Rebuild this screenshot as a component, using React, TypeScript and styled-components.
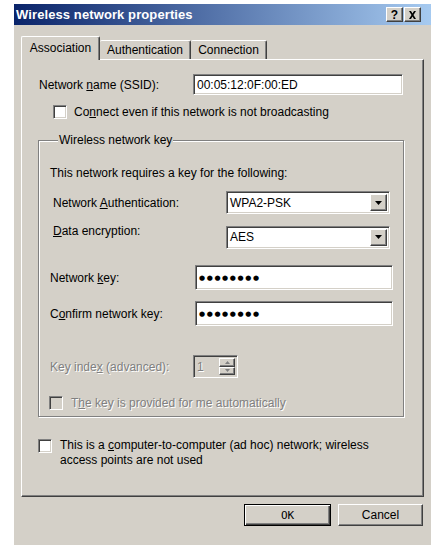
import React from 'react';
import styled, { createGlobalStyle, css } from 'styled-components';

const GlobalStyle = createGlobalStyle`
  html, body {
    margin: 0;
    padding: 0;
    background: #ffffff;
  }
  body {
    font-family: "Liberation Sans", Arial, sans-serif;
    font-size: 12px;
    color: #000000;
  }
`;

const face = '#D4D0C8';

const raised = css`
  border: 1px solid;
  border-color: #ffffff #404040 #404040 #ffffff;
  box-shadow: inset -1px -1px #808080;
`;

const sunken = css`
  border: 1px solid;
  border-color: #808080 #ffffff #ffffff #808080;
  box-shadow: inset 1px 1px #404040, inset -1px -1px ${face};
`;

export default function App() {
  return (
    <>
      <GlobalStyle />
      <Dialog>
        <TitleBar>
          <TitleText>Wireless network properties</TitleText>
          <TitleButtons>
            <TitleButton>?</TitleButton>
            <TitleButton>
              <svg width="9" height="8" viewBox="0 0 9 8">
                <path d="M1 0h2l1.5 2.5L6 0h2L5.5 4 8 8H6L4.5 5.5 3 8H1l2.5-4z" fill="#000" />
              </svg>
            </TitleButton>
          </TitleButtons>
        </TitleBar>

        <TabRow>
          <Tab $active $width={79}>Association</Tab>
          <Tab $width={91}>Authentication</Tab>
          <Tab $width={76}>Connection</Tab>
        </TabRow>

        <Page>
          <SsidRow>
            <Label $width={154}>
              Network <u>n</u>ame (SSID):
            </Label>
            <TextBox $width={210} $height={21}>
              00:05:12:0F:00:ED
            </TextBox>
          </SsidRow>

          <CheckRow $top={10} $left={31}>
            <CheckBox />
            <span>
              Co<u>n</u>nect even if this network is not broadcasting
            </span>
          </CheckRow>

          <Group>
            <Legend>Wireless network key</Legend>
            <Intro>This network requires a key for the following:</Intro>

            <FieldRow $top={11}>
              <Label $width={176} $indent={3}>
                Network <u>A</u>uthentication:
              </Label>
              <Select value="WPA2-PSK" />
            </FieldRow>
            <FieldRow $top={10}>
              <Label $width={176} $indent={3} $lift={6}>
                <u>D</u>ata encryption:
              </Label>
              <Select value="AES" />
            </FieldRow>

            <FieldRow $top={15}>
              <Label $width={145}>
                Network <u>k</u>ey:
              </Label>
              <TextBox $width={198} $height={25}>
                <Dots>●●●●●●●●</Dots>
              </TextBox>
            </FieldRow>
            <FieldRow $top={11}>
              <Label $width={145}>
                C<u>o</u>nfirm network key:
              </Label>
              <TextBox $width={198} $height={25}>
                <Dots>●●●●●●●●</Dots>
              </TextBox>
            </FieldRow>

            <FieldRow $top={29}>
              <Label $width={143} $disabled>
                Key inde<u>x</u> (advanced):
              </Label>
              <Spinner>
                <SpinValue>1</SpinValue>
                <SpinButtons>
                  <SpinButton>
                    <svg width="5" height="3" viewBox="0 0 5 3">
                      <path d="M2.5 0L5 3H0z" fill="#808080" />
                    </svg>
                  </SpinButton>
                  <SpinButton>
                    <svg width="5" height="3" viewBox="0 0 5 3">
                      <path d="M0 0h5L2.5 3z" fill="#808080" />
                    </svg>
                  </SpinButton>
                </SpinButtons>
              </Spinner>
            </FieldRow>

            <CheckRow $top={18} $left={-1} $gap={8}>
              <CheckBox $disabled />
              <Disabled>
                T<u>h</u>e key is provided for me automatically
              </Disabled>
            </CheckRow>
          </Group>

          <CheckRow $top={22} $left={16} $gap={8} $wrap>
            <CheckBox />
            <AdHocText>
              This is a <u>c</u>omputer-to-computer (ad hoc) network; wireless
              <br />
              access points are not used
            </AdHocText>
          </CheckRow>
        </Page>

        <ButtonRow>
          <PushButton $default $width={87}>
            OK
          </PushButton>
          <PushButton $width={85}>Cancel</PushButton>
        </ButtonRow>
      </Dialog>
    </>
  );
}

const Select = ({ value }: { value: string }) => (
  <SelectBox>
    <SelectValue>{value}</SelectValue>
    <DropButton>
      <svg width="7" height="4" viewBox="0 0 7 4">
        <path d="M0 0h7L3.5 4z" fill="#000" />
      </svg>
    </DropButton>
  </SelectBox>
);

const Dialog = styled.div`
  margin: 4px 0 0 14px;
  width: 417px;
  height: 541px;
  background: ${face};
  display: flex;
  flex-direction: column;
`;

const TitleBar = styled.div`
  height: 21px;
  background: linear-gradient(to right, #0a246a, #a6caf0);
  display: flex;
  align-items: center;
  justify-content: space-between;
  padding: 0 10px 0 2px;
`;

const TitleText = styled.div`
  color: #ffffff;
  font-weight: bold;
  font-size: 13px;
  letter-spacing: 0.1px;
`;

const TitleButtons = styled.div`
  display: flex;
  gap: 1px;
`;

const TitleButton = styled.div`
  ${raised};
  background: ${face};
  width: 17px;
  height: 15px;
  box-sizing: border-box;
  display: flex;
  align-items: center;
  justify-content: center;
  font-weight: bold;
  font-size: 12px;
  line-height: 1;
`;

const TabRow = styled.div`
  display: flex;
  align-items: flex-end;
  height: 24px;
  margin: 11px 0 0 7px;
`;

const Tab = styled.div<{ $active?: boolean; $width: number }>`
  position: relative;
  z-index: ${({ $active }) => ($active ? 2 : 0)};
  box-sizing: border-box;
  width: ${({ $width }) => $width}px;
  background: ${face};
  border: 1px solid;
  border-color: #ffffff #404040 transparent #ffffff;
  border-bottom: none;
  border-radius: 2px 2px 0 0;
  box-shadow: inset -1px 0 #808080;
  display: flex;
  align-items: center;
  justify-content: center;
  ${({ $active }) =>
    $active
      ? css`
          height: 24px;
          padding-bottom: 1px;
        `
      : css`
          height: 19px;
          margin-bottom: 1px;
          border-left: none;
        `}
`;

const Page = styled.div`
  position: relative;
  z-index: 1;
  margin: -1px 7px 0 7px;
  height: 438px;
  box-sizing: border-box;
  border: 1px solid;
  border-color: #ffffff #404040 #404040 #ffffff;
  box-shadow: inset -1px -1px #808080;
  display: flex;
  flex-direction: column;
`;

const SsidRow = styled.div`
  display: flex;
  align-items: center;
  margin-top: 14px;
  padding-left: 17px;
`;

const Label = styled.div<{
  $width: number;
  $indent?: number;
  $lift?: number;
  $disabled?: boolean;
}>`
  width: ${({ $width }) => $width}px;
  padding-left: ${({ $indent }) => $indent || 0}px;
  padding-bottom: ${({ $lift }) => ($lift || 0) * 2}px;
  box-sizing: border-box;
  flex: none;
  white-space: nowrap;
  ${({ $disabled }) =>
    $disabled &&
    css`
      color: #808080;
      text-shadow: 1px 1px #ffffff;
    `}
`;

const TextBox = styled.div<{ $width: number; $height: number }>`
  ${sunken};
  background: #ffffff;
  box-sizing: border-box;
  width: ${({ $width }) => $width}px;
  height: ${({ $height }) => $height}px;
  display: flex;
  align-items: center;
  padding-left: 3px;
  white-space: nowrap;
`;

const Dots = styled.span`
  font-family: "DejaVu Sans", sans-serif;
  font-size: 7px;
  letter-spacing: 1.6px;
`;

const CheckRow = styled.div<{ $top: number; $left: number; $gap?: number; $wrap?: boolean }>`
  display: flex;
  align-items: ${({ $wrap }) => ($wrap ? 'flex-start' : 'center')};
  gap: ${({ $gap }) => $gap || 7}px;
  margin-top: ${({ $top }) => $top}px;
  padding-left: ${({ $left }) => Math.max($left, 0)}px;
  margin-left: ${({ $left }) => Math.min($left, 0)}px;
  white-space: nowrap;
`;

const CheckBox = styled.div<{ $disabled?: boolean }>`
  ${sunken};
  flex: none;
  box-sizing: border-box;
  width: 14px;
  height: 14px;
  background: ${({ $disabled }) => ($disabled ? face : '#ffffff')};
`;

const Disabled = styled.span`
  color: #808080;
  text-shadow: 1px 1px #ffffff;
`;

const AdHocText = styled.span`
  line-height: 15px;
  margin-top: -1px;
`;

const Group = styled.fieldset`
  margin: 14px 0 0 16px;
  width: 366px;
  box-sizing: border-box;
  padding: 19px 0 6px 11px;
  border: 1px solid #808080;
  box-shadow: inset 1px 1px #ffffff, 1px 1px #ffffff;
  min-width: 0;
`;

const Legend = styled.legend`
  padding: 0 1px;
  margin-left: 8px;
  line-height: 14px;
  background: ${face};
`;

const Intro = styled.div`
  line-height: 14px;
`;

const FieldRow = styled.div<{ $top: number }>`
  display: flex;
  align-items: center;
  margin-top: ${({ $top }) => $top}px;
`;

const SelectBox = styled.div`
  ${sunken};
  background: #ffffff;
  box-sizing: border-box;
  width: 164px;
  height: 23px;
  display: flex;
  align-items: stretch;
  padding: 2px;
`;

const SelectValue = styled.div`
  flex: 1;
  display: flex;
  align-items: center;
  padding-left: 1px;
`;

const DropButton = styled.div`
  ${raised};
  background: ${face};
  width: 17px;
  box-sizing: border-box;
  display: flex;
  align-items: center;
  justify-content: center;
`;

const Spinner = styled.div`
  ${sunken};
  background: ${face};
  box-sizing: border-box;
  width: 45px;
  height: 23px;
  display: flex;
  padding: 2px;
`;

const SpinValue = styled.div`
  flex: 1;
  color: #808080;
  text-shadow: 1px 1px #ffffff;
  display: flex;
  align-items: center;
  padding-left: 1px;
`;

const SpinButtons = styled.div`
  display: flex;
  flex-direction: column;
  width: 16px;
`;

const SpinButton = styled.div`
  ${raised};
  background: ${face};
  flex: 1;
  box-sizing: border-box;
  display: flex;
  align-items: center;
  justify-content: center;
`;

const ButtonRow = styled.div`
  display: flex;
  justify-content: flex-end;
  gap: 7px;
  margin-top: 7px;
  padding-right: 8px;
`;

const PushButton = styled.div<{ $default?: boolean; $width: number }>`
  width: ${({ $width }) => $width}px;
  height: 22px;
  box-sizing: border-box;
  background: ${face};
  display: flex;
  align-items: center;
  justify-content: center;
  ${({ $default }) =>
    $default
      ? css`
          border: 1px solid #000000;
          box-shadow: inset 1px 1px #ffffff, inset -1px -1px #404040,
            inset -2px -2px #808080;
          font-family: "DejaVu Sans Mono", monospace;
          font-size: 11px;
        `
      : raised}
`;
